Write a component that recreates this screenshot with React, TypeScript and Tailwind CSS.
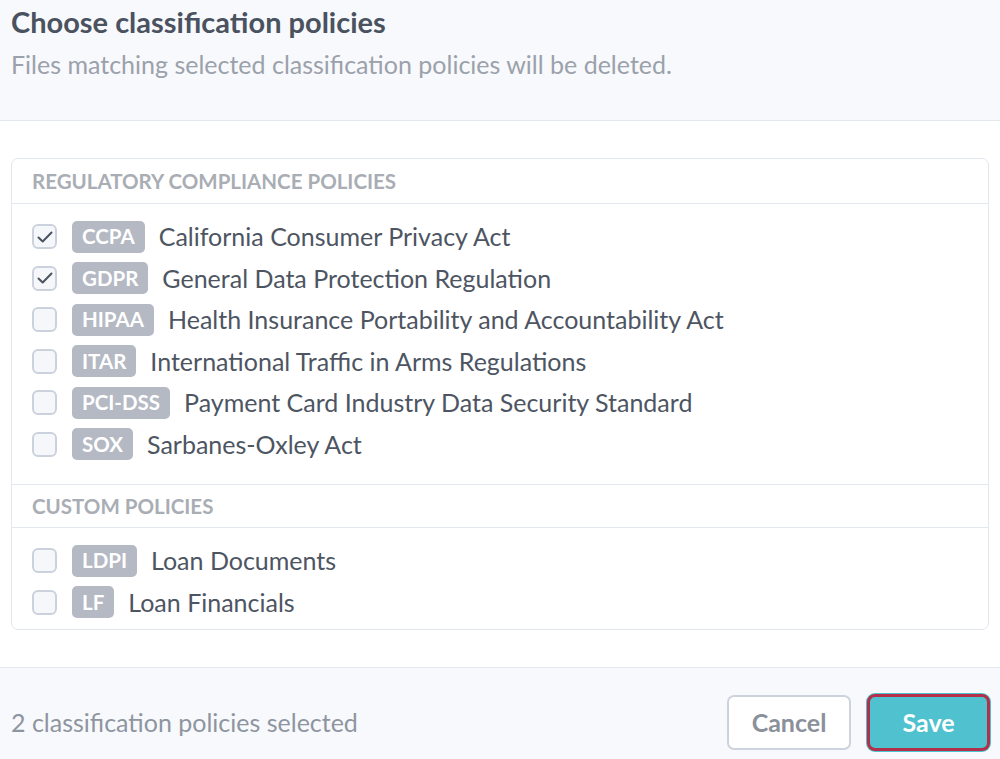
import React from "react";

type Policy = { code: string; name: string; checked?: boolean };

const regulatory: Policy[] = [
  { code: "CCPA", name: "California Consumer Privacy Act", checked: true },
  { code: "GDPR", name: "General Data Protection Regulation", checked: true },
  { code: "HIPAA", name: "Health Insurance Portability and Accountability Act" },
  { code: "ITAR", name: "International Traffic in Arms Regulations" },
  { code: "PCI-DSS", name: "Payment Card Industry Data Security Standard" },
  { code: "SOX", name: "Sarbanes-Oxley Act" },
];

const custom: Policy[] = [
  { code: "LDPI", name: "Loan Documents" },
  { code: "LF", name: "Loan Financials" },
];

function Checkbox({ checked }: { checked?: boolean }) {
  return (
    <span className="flex h-[25px] w-[25px] shrink-0 items-center justify-center rounded-[6px] border-2 border-[#cbd2dd] bg-[#f6f7fa]">
      {checked && (
        <svg width="18" height="18" viewBox="0 0 18 18" fill="none">
          <path d="M2.5 9.5l4.2 4L15.5 4.5" stroke="#4b5360" strokeWidth="2" strokeLinecap="round" strokeLinejoin="round" />
        </svg>
      )}
    </span>
  );
}

function Row({ p }: { p: Policy }) {
  return (
    <label className="flex h-[41.5px] items-center">
      <Checkbox checked={p.checked} />
      <span className="ml-[15px] flex h-[32px] items-center rounded-[5px] bg-[#b4b9c3] px-[10px] text-[20.5px] font-bold text-white">
        {p.code}
      </span>
      <span className="ml-[14px] text-[25px] text-[#4d5562]">{p.name}</span>
    </label>
  );
}

function Section({ title, items, head, className }: { title: string; items: Policy[]; head: string; className: string }) {
  return (
    <div>
      <div className={`flex items-center border-b border-[#e3e7ee] px-[20px] text-[20.5px] font-bold uppercase text-[#a9adb4] ${head}`}>
        {title}
      </div>
      <div className={`px-[20px] ${className}`}>
        {items.map((p) => (
          <Row key={p.code} p={p} />
        ))}
      </div>
    </div>
  );
}

export default function App() {
  return (
    <div className="flex h-[759px] w-[1000px] flex-col bg-white font-['Lato',sans-serif]">
      <header className="h-[121px] shrink-0 border-b border-[#e3e7ee] bg-[#f8f9fc] px-[11px] pt-[3px]">
        <h1 className="text-[29px] font-bold leading-[38px] text-[#4a5260]">Choose classification policies</h1>
        <p className="mt-[7px] text-[25px] leading-[32px] text-[#9ba1ab]">
          Files matching selected classification policies will be deleted.
        </p>
      </header>

      <main className="flex-1 px-[11px] pt-[37px]">
        <div className="rounded-[7px] border border-[#e3e7ee]">
          <Section
            title="Regulatory Compliance Policies"
            items={regulatory}
            head="h-[45px]"
            className="pt-[12px] pb-[19px] border-b border-[#e3e7ee]"
          />
          <Section title="Custom Policies" items={custom} head="h-[43px]" className="pt-[12px] pb-[6px]" />
        </div>
      </main>

      <footer className="flex h-[92px] shrink-0 items-center justify-between border-t border-[#e3e7ee] bg-[#f8f9fc] pl-[11px] pr-[10px] pt-[18px]">
        <span className="text-[25px] text-[#8e95a0]">2 classification policies selected</span>
        <div className="flex items-center gap-[16px]">
          <button className="h-[55px] w-[124px] rounded-[7px] border-2 border-[#cdd3dc] bg-white text-[25px] font-bold text-[#8a919b]">
            Cancel
          </button>
          <button className="h-[57px] w-[123px] rounded-[8px] border-[3px] border-[#b3304a] bg-[#50c1ce] text-[25px] font-bold text-white ring-1 ring-[#50c1ce]">
            Save
          </button>
        </div>
      </footer>
    </div>
  );
}
